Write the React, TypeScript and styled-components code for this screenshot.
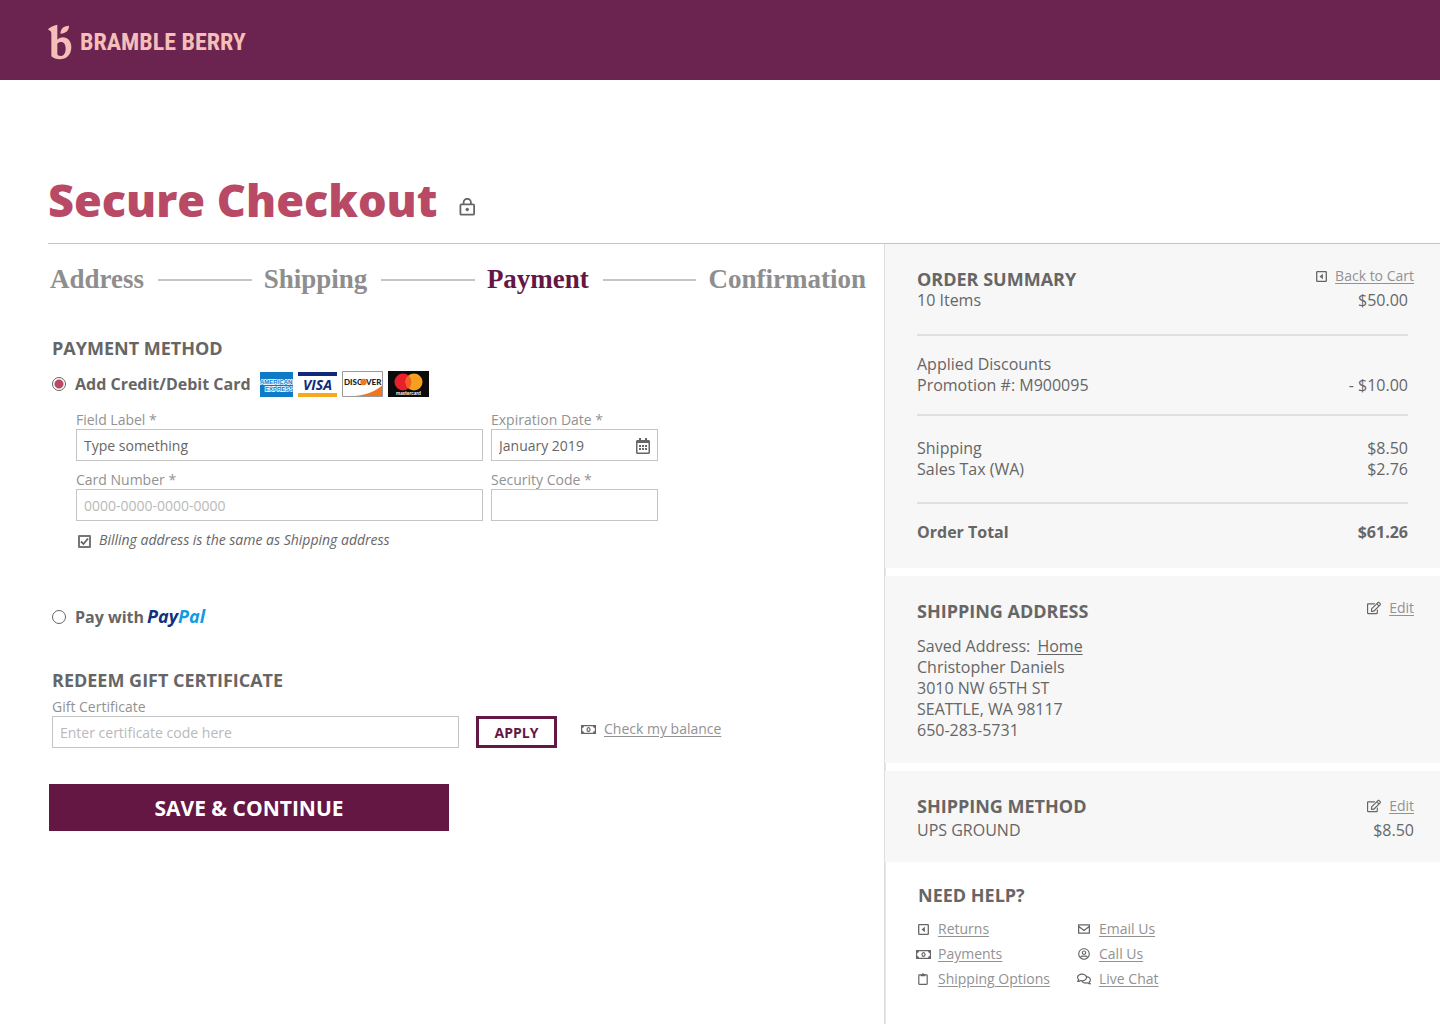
import React, { useState } from "react";
import styled, { createGlobalStyle } from "styled-components";
import { FaRegCalendarAlt, FaRegComments, FaRegUserCircle, FaRegEdit } from "react-icons/fa";

const sans = `"Open Sans", Lato, sans-serif`;
const serif = `"Liberation Serif", "Times New Roman", serif`;
const plum = "#651744";
const ink = "#666";
const muted = "#929292";
const line = "#c4c4c4";

const GlobalStyle = createGlobalStyle`
  *, *::before, *::after { box-sizing: border-box; }
  body { margin: 0; background: #fff; color: ${ink}; font: 16px/21px ${sans}; }
  h1, h2, p, dl, dd, ol, ul, fieldset { margin: 0; padding: 0; border: 0; list-style: none; }
  input, button { font-family: inherit; }
`;

const Page = styled.div`
  min-height: 100vh;
  display: flex;
  flex-direction: column;
`;

const Header = styled.header`
  height: 80px;
  padding: 0 48px;
  display: flex;
  align-items: center;
  background: #6b234f;
`;

const Brand = styled.a`
  display: flex;
  align-items: center;
  gap: 8px;
  margin-top: 4px;
  color: #f5beb8;
  text-decoration: none;
  font: bold 24px/32px "Liberation Sans Narrow", "Roboto Condensed", Roboto, sans-serif;
`;

const TitleBar = styled.div`
  display: flex;
  align-items: flex-end;
  gap: 22px;
  margin-left: 48px;
  padding: 92px 0 15px;
  border-bottom: 1px solid ${line};
`;

const Title = styled.h1`
  color: #b84a66;
  font-size: 45px;
  line-height: 56px;
  font-weight: 800;
`;

const LockIcon = styled.svg`
  margin-bottom: 12px;
`;

const Columns = styled.div`
  flex: 1;
  display: grid;
  grid-template-columns: minmax(0, 884fr) minmax(0, 556fr);
`;

const Main = styled.main`
  padding: 19px 18px 40px 48px;
`;

const Steps = styled.ol`
  display: flex;
  align-items: center;
  padding-left: 2px;
`;

const Step = styled.li<{ $current?: boolean }>`
  flex: 1 1 auto;
  display: flex;
  align-items: center;
  color: ${(p) => (p.$current ? plum : "#8e8e8e")};
  font: bold 27px/32px ${serif};

  &:last-child {
    flex: 0 0 auto;
  }

  &:not(:last-child)::after {
    content: "";
    flex: 1;
    height: 2px;
    margin: 2px 12px 0 14px;
    background: ${line};
  }
`;

const Heading = styled.h2`
  font-size: 18px;
  line-height: 22px;
  font-weight: 700;
`;

const PaymentSection = styled.section`
  padding: 42px 0 0 4px;
`;

const Option = styled.div`
  display: flex;
  align-items: center;
  height: 28px;
`;

const CardOption = styled(Option)`
  margin-top: 11px;
`;

const OptionLabel = styled.label`
  margin: 0 9px;
  font-weight: 700;
`;

const Radio = styled.input`
  appearance: none;
  width: 14px;
  height: 14px;
  margin: 0;
  border: 1px solid #666;
  border-radius: 50%;
  background: #fff;

  &:checked {
    background: radial-gradient(circle, #b84a66 4px, #fff 5px);
  }
`;

const Cards = styled.span`
  display: flex;
  align-items: center;
  gap: 5px;
`;

const CardFields = styled.div`
  display: grid;
  grid-template-columns: minmax(0, 407px) minmax(0, 167px);
  gap: 10px 8px;
  padding: 13px 0 0 24px;
`;

const Field = styled.div`
  display: flex;
  flex-direction: column;
  position: relative;
`;

const Label = styled.label`
  color: ${muted};
  font-size: 14px;
  line-height: 18px;
`;

const TextInput = styled.input`
  width: 100%;
  height: 32px;
  padding: 0 7px;
  border: 1px solid ${line};
  border-radius: 0;
  background: #fff;
  color: ${ink};
  font-size: 14px;
  outline-color: ${plum};

  &::placeholder {
    color: #b9b9b9;
    opacity: 1;
  }
`;

const FieldIcon = styled.span`
  position: absolute;
  right: 7px;
  bottom: 7px;
  display: flex;
`;

const CheckRow = styled.div`
  display: flex;
  align-items: center;
  gap: 8px;
  padding: 9px 0 0 26px;
`;

const Checkbox = styled.input`
  appearance: none;
  width: 13px;
  height: 13px;
  margin: 2px 0 0;
  border: 2px solid #777;
  border-radius: 1px;

  &:checked {
    background: no-repeat center / 9px 9px
      url("data:image/svg+xml,%3Csvg xmlns='http://www.w3.org/2000/svg' viewBox='0 0 9 9'%3E%3Cpath d='M1 4.5l2.500 2.500 4.500-5.500' fill='none' stroke='%23666' stroke-width='1.800'/%3E%3C/svg%3E");
  }
`;

const CheckLabel = styled.label`
  font-size: 14px;
  line-height: 20px;
  font-style: italic;
`;

const PayPalRow = styled(Option)`
  margin-top: 53px;
`;

const PayPal = styled.span`
  margin-left: 3px;
  color: #12307f;
  font-size: 18px;
  font-style: italic;

  em {
    color: #129be2;
  }
`;

const GiftSection = styled.section`
  padding: 38px 0 0 4px;
`;

const GiftRow = styled.form`
  display: flex;
  align-items: flex-end;
  padding-top: 7px;
`;

const GiftField = styled(Field)`
  flex: 0 1 407px;
`;

const ApplyButton = styled.button`
  width: 81px;
  height: 32px;
  margin: 0 24px 0 17px;
  padding: 0;
  border: 3px solid ${plum};
  background: #fff;
  color: ${plum};
  font-size: 14px;
  font-weight: 700;
`;

const BalanceLink = styled.div`
  display: flex;
  padding-bottom: 11px;
`;

const SaveButton = styled.button`
  width: 400px;
  max-width: 100%;
  height: 47px;
  margin: 36px 0 0 1px;
  padding: 0;
  border: 0;
  background: ${plum};
  color: #fff;
  font-size: 21px;
  font-weight: 700;
`;

const Aside = styled.aside`
  border-left: 1px solid #dedede;
  box-shadow: inset 1px 0 #e4e4e4;
`;

const Panel = styled.section`
  margin-bottom: 8px;
  padding: 24px 26px 21px 32px;
  background: #f7f7f7;

  &:last-of-type {
    margin-bottom: 0;
  }
`;

const PanelTop = styled.div<{ $center?: boolean }>`
  display: flex;
  justify-content: space-between;
  align-items: ${(p) => (p.$center ? "center" : "flex-start")};
`;

const IconLink = styled.a`
  display: inline-flex;
  align-items: center;
  gap: 8px;
  color: ${muted};
  font-size: 14px;
  line-height: 16px;
  text-underline-offset: 2px;

  svg {
    flex: none;
    color: ${ink};
  }
`;

const Totals = styled.dl`
  padding-right: 6px;
`;

const TotalGroup = styled.div<{ $top?: number; $bottom?: number; $strong?: boolean }>`
  padding: ${(p) => p.$top ?? 0}px 0 ${(p) => p.$bottom ?? 0}px;
  font-weight: ${(p) => (p.$strong ? 700 : 400)};

  & + & {
    border-top: 2px solid #dfdfdf;
  }
`;

const Row = styled.div`
  display: flex;
  justify-content: space-between;
`;

const Address = styled.div`
  padding: 14px 0 1px;

  a {
    margin-left: 3px;
    color: inherit;
    text-underline-offset: 2px;
  }
`;

const MethodRow = styled(Row)`
  padding-top: 3px;
`;

const Help = styled.section`
  padding: 22px 26px 32px 30px;

  h2 {
    padding-left: 3px;
  }
`;

const HelpLinks = styled.ul`
  display: grid;
  grid-template-columns: 161px 161px;
  row-gap: 9px;
  padding-top: 15px;

  li {
    display: flex;
  }

  a {
    gap: 7px;
  }
`;

const IconSlot = styled.span`
  width: 16px;
  display: flex;
  justify-content: center;
`;

const Money = () => (
  <svg width="15" height="9" viewBox="0 0 15 9" aria-hidden="true">
    <path
      fill="currentColor"
      fillRule="evenodd"
      d="M0 0h15v9H0zM3 1.2A1.9 1.9 0 0 1 1.2 3v3A1.9 1.9 0 0 1 3 7.8h9A1.9 1.9 0 0 1 13.800 6V3A1.900 1.900 0 0 1 12 1.200z"
    />
    <ellipse cx="7.500" cy="4.500" rx="1.500" ry="1.900" fill="none" stroke="currentColor" strokeWidth="1.200" />
  </svg>
);

const CaretBox = () => (
  <svg width="11" height="11" viewBox="0 0 11 11" aria-hidden="true">
    <rect x=".7" y=".7" width="9.600" height="9.600" rx=".6" fill="none" stroke="currentColor" strokeWidth="1.300" />
    <path d="M6.900 2.700v5.600L3.500 5.500z" fill="currentColor" />
  </svg>
);

const Mail = () => (
  <svg width="12" height="10" viewBox="0 0 12 10" aria-hidden="true">
    <path d="M.6.900h10.800v8.200H.6zM.8 2.500 6 6.500l5.200-4" fill="none" stroke="currentColor" strokeWidth="1.300" strokeLinejoin="round" />
  </svg>
);

const Clipboard = () => (
  <svg width="10" height="12" viewBox="0 0 10 12" aria-hidden="true">
    <rect x=".8" y="1.900" width="8.400" height="9.400" rx=".5" fill="none" stroke="currentColor" strokeWidth="1.200" />
    <path d="M2.700 1.200h1.300a1 1 0 0 1 2 0h1.300v2H2.700z" fill="currentColor" />
  </svg>
);

const Lock = () => (
  <LockIcon width="17" height="18" viewBox="0 0 17 18" role="img" aria-label="Secure">
    <g fill="none" stroke="#666" strokeWidth="1.800">
      <rect x="1.400" y="6.400" width="13.700" height="10.300" rx="1" />
      <path d="M4.600 6.400V4.400a3.650 3.650 0 0 1 7.300 0v2" />
    </g>
    <circle cx="8.250" cy="11.500" r="1.700" fill="#666" />
  </LockIcon>
);

const BrandMark = () => (
  <svg width="24" height="36" viewBox="54 41 72 108" aria-hidden="true">
    <g fill="currentColor">
      <path
        fillRule="evenodd"
        d="M82 43C76 44 60 50 54 57C58 62 64 60 64 70V138C70 144 80 147 88 147C110 147 124 133 124 110C124 92 112 81 99 81C92 81 86 84 82 88ZM82 100C84 97 89 95 93 95C102 95 107 103 107 115C107 128 101 137 92 137C87 137 82 135 82 131Z"
      />
      <path d="M91 70C92 55 100 47 117 46C117 60 108 69 91 70Z" />
    </g>
  </svg>
);

const CardLogos = () => (
  <Cards>
    <svg width="33" height="25" viewBox="0 0 33 25" role="img" aria-label="American Express">
      <rect width="33" height="25" fill="#0f7bc7" />
      <g fill="#0f7bc7" stroke="#fff" strokeWidth="1.400" paintOrder="stroke" fontFamily="Liberation Sans" fontWeight="bold" fontSize="6">
        <text x="0" y="12">AMERICAN</text>
        <text x="5" y="18.500">EXPRESS</text>
      </g>
    </svg>
    <svg width="39" height="25" viewBox="0 0 39 25" role="img" aria-label="Visa">
      <rect width="39" height="25" fill="#fff" />
      <rect width="39" height="4" fill="#0e2a7d" />
      <rect y="21" width="39" height="4" fill="#f7a81b" />
      <text x="5" y="18" fill="#0e2a7d" fontFamily="Open Sans" fontWeight="700" fontStyle="italic" fontSize="14">VISA</text>
    </svg>
    <svg width="41" height="26" viewBox="0 0 41 26" role="img" aria-label="Discover">
      <path d="M.5.500h40v25H.5z" fill="#fff" stroke="#999" />
      <path d="M40 14.500C34 20 24 24 13 25h27z" fill="#f1771f" />
      <g fill="#222" fontFamily="Lato" fontWeight="900" fontSize="8">
        <text x="2" y="14">DISC</text>
        <text x="24" y="14">VER</text>
      </g>
      <circle cx="21.500" cy="11" r="3.200" fill="#f1771f" />
    </svg>
    <svg width="41" height="26" viewBox="0 0 41 26" role="img" aria-label="Mastercard">
      <rect width="41" height="26" fill="#0b0b0b" />
      <circle cx="15" cy="11" r="8.500" fill="#e8202b" />
      <circle cx="26" cy="11" r="8.500" fill="#f79f1f" />
      <path d="M20.500 4.500a8.500 8.500 0 0 1 0 13a8.500 8.500 0 0 1 0-13" fill="#f26122" />
      <text x="20.500" y="24" fill="#fff" fontFamily="Lato" fontWeight="bold" fontSize="5" textAnchor="middle">mastercard</text>
    </svg>
  </Cards>
);

const steps = ["Address", "Shipping", "Payment", "Confirmation"];

const helpLinks = [
  { text: "Returns", icon: <CaretBox /> },
  { text: "Email Us", icon: <Mail /> },
  { text: "Payments", icon: <Money /> },
  { text: "Call Us", icon: <FaRegUserCircle size={12} /> },
  { text: "Shipping Options", icon: <Clipboard /> },
  { text: "Live Chat", icon: <FaRegComments size={14} /> },
];

const EditLink = () => (
  <IconLink href="#edit">
    <FaRegEdit size={14} />
    Edit
  </IconLink>
);

export default function App() {
  const [method, setMethod] = useState("card");
  const [sameAddress, setSameAddress] = useState(true);

  return (
    <Page>
      <GlobalStyle />
      <Header>
        <Brand href="#home">
          <BrandMark />
          BRAMBLE BERRY
        </Brand>
      </Header>
      <TitleBar>
        <Title>Secure Checkout</Title>
        <Lock />
      </TitleBar>
      <Columns>
        <Main>
          <Steps>
            {steps.map((s) => (
              <Step key={s} $current={s === "Payment"}>
                {s}
              </Step>
            ))}
          </Steps>
          <PaymentSection>
            <Heading>PAYMENT METHOD</Heading>
            <CardOption>
              <Radio type="radio" id="card" name="method" checked={method === "card"} onChange={() => setMethod("card")} />
              <OptionLabel htmlFor="card">Add Credit/Debit Card</OptionLabel>
              <CardLogos />
            </CardOption>
            <CardFields>
              <Field>
                <Label htmlFor="name">Field Label *</Label>
                <TextInput id="name" defaultValue="Type something" />
              </Field>
              <Field>
                <Label htmlFor="expiry">Expiration Date *</Label>
                <TextInput id="expiry" defaultValue="January 2019" />
                <FieldIcon>
                  <FaRegCalendarAlt size={16} />
                </FieldIcon>
              </Field>
              <Field>
                <Label htmlFor="number">Card Number *</Label>
                <TextInput id="number" placeholder="0000-0000-0000-0000" />
              </Field>
              <Field>
                <Label htmlFor="code">Security Code *</Label>
                <TextInput id="code" />
              </Field>
            </CardFields>
            <CheckRow>
              <Checkbox type="checkbox" id="same" checked={sameAddress} onChange={(e) => setSameAddress(e.target.checked)} />
              <CheckLabel htmlFor="same">Billing address is the same as Shipping address</CheckLabel>
            </CheckRow>
            <PayPalRow>
              <Radio type="radio" id="paypal" name="method" checked={method === "paypal"} onChange={() => setMethod("paypal")} />
              <OptionLabel htmlFor="paypal">
                Pay with
                <PayPal>
                  Pay<em>Pal</em>
                </PayPal>
              </OptionLabel>
            </PayPalRow>
          </PaymentSection>
          <GiftSection>
            <Heading>REDEEM GIFT CERTIFICATE</Heading>
            <GiftRow onSubmit={(e) => e.preventDefault()}>
              <GiftField>
                <Label htmlFor="gift">Gift Certificate</Label>
                <TextInput id="gift" placeholder="Enter certificate code here" />
              </GiftField>
              <ApplyButton type="submit">APPLY</ApplyButton>
              <BalanceLink>
                <IconLink href="#balance">
                  <Money />
                  Check my balance
                </IconLink>
              </BalanceLink>
            </GiftRow>
          </GiftSection>
          <SaveButton type="button">SAVE &amp; CONTINUE</SaveButton>
        </Main>
        <Aside>
          <Panel>
            <PanelTop>
              <Heading>ORDER SUMMARY</Heading>
              <IconLink href="#cart">
                <CaretBox />
                Back to Cart
              </IconLink>
            </PanelTop>
            <Totals>
              <TotalGroup $bottom={23}>
                <Row><dt>10 Items</dt><dd>$50.00</dd></Row>
              </TotalGroup>
              <TotalGroup $top={18} $bottom={18}>
                <Row><dt>Applied Discounts</dt></Row>
                <Row><dt>Promotion #: M900095</dt><dd>- $10.00</dd></Row>
              </TotalGroup>
              <TotalGroup $top={22} $bottom={22}>
                <Row><dt>Shipping</dt><dd>$8.50</dd></Row>
                <Row><dt>Sales Tax (WA)</dt><dd>$2.76</dd></Row>
              </TotalGroup>
              <TotalGroup $top={18} $bottom={4} $strong>
                <Row><dt>Order Total</dt><dd>$61.26</dd></Row>
              </TotalGroup>
            </Totals>
          </Panel>
          <Panel>
            <PanelTop>
              <Heading>SHIPPING ADDRESS</Heading>
              <EditLink />
            </PanelTop>
            <Address>
              <p>Saved Address: <a href="#home-address">Home</a></p>
              <p>Christopher Daniels</p>
              <p>3010 NW 65TH ST</p>
              <p>SEATTLE, WA 98117</p>
              <p>650-283-5731</p>
            </Address>
          </Panel>
          <Panel>
            <PanelTop $center>
              <Heading>SHIPPING METHOD</Heading>
              <EditLink />
            </PanelTop>
            <MethodRow>
              <span>UPS GROUND</span>
              <span>$8.50</span>
            </MethodRow>
          </Panel>
          <Help as="div">
            <Heading>NEED HELP?</Heading>
            <HelpLinks>
              {helpLinks.map((l) => (
                <li key={l.text}>
                  <IconLink href="#help">
                    <IconSlot>{l.icon}</IconSlot>
                    {l.text}
                  </IconLink>
                </li>
              ))}
            </HelpLinks>
          </Help>
        </Aside>
      </Columns>
    </Page>
  );
}
